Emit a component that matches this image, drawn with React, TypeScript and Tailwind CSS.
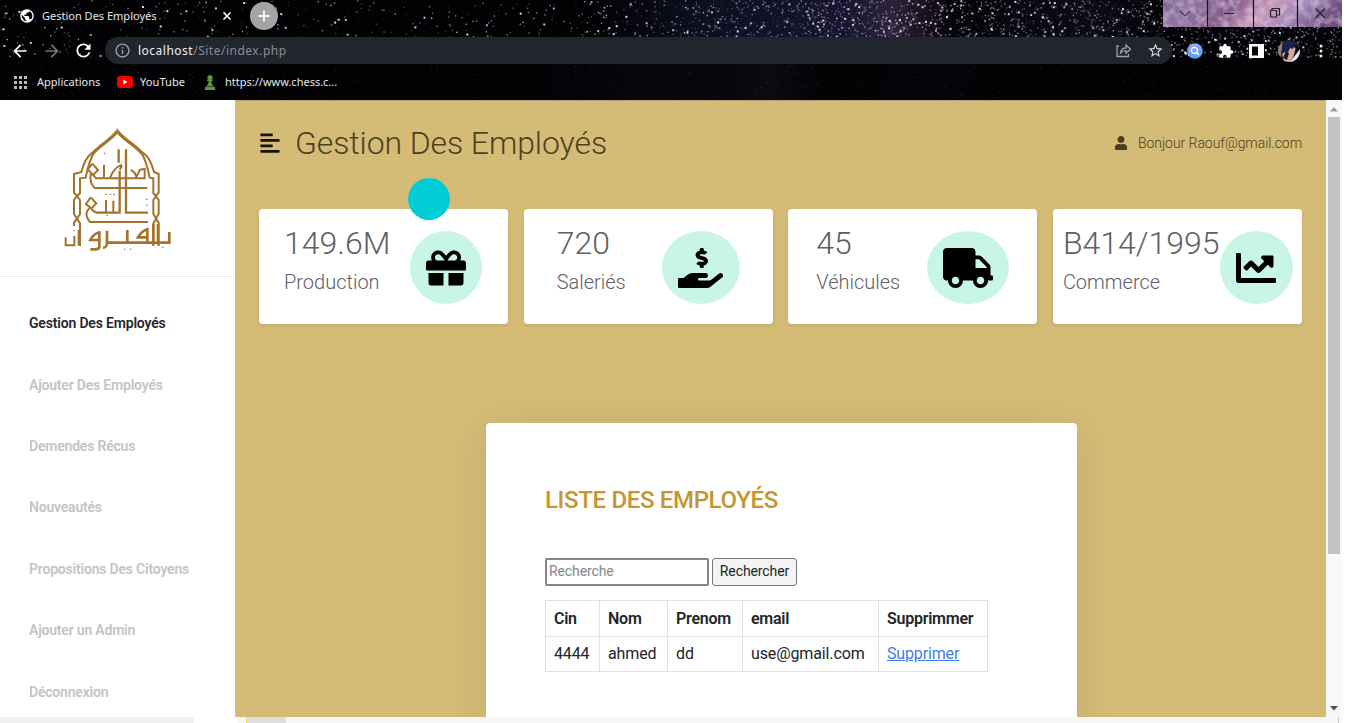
import React from "react";
import { FaAlignLeft, FaChartLine, FaGift, FaHandHoldingUsd, FaTruck, FaUser } from "react-icons/fa";
import { MdExtension, MdPublic, MdRefresh, MdStarBorder, MdArrowBack, MdArrowForward, MdInfoOutline } from "react-icons/md";

function makeRandom(seed: number) {
  let s = seed;
  return () => {
    s = (s * 1664525 + 1013904223) % 4294967296;
    return s / 4294967296;
  };
}

function buildStars() {
  const rnd = makeRandom(41);
  const stars: { x: number; y: number; s: number; o: number; c: string }[] = [];
  const tints = ["#ffffff", "#d9dcff", "#c3bfe2", "#f2e4ff"];
  for (let i = 0; i < 10000; i++) {
    const x = rnd() * 1342;
    const y = rnd() * 57;
    const density = x < 580 ? 0.14 : x < 680 ? 0.35 : x < 800 ? 0.65 : x < 940 ? 0.95 : 0.75;
    const keep = rnd();
    const bright = rnd();
    const tint = tints[Math.floor(rnd() * 4)];
    if (keep > density) continue;
    const big = bright > 0.94;
    stars.push({ x, y, s: big ? 2 : 1.4, o: big ? 0.85 : bright * bright * 0.8, c: tint });
  }
  for (let i = 0; i < 500; i++) {
    stars.push({ x: rnd() * 1342, y: 57 + rnd() * 42, s: 1, o: rnd() * 0.22, c: tints[Math.floor(rnd() * 4)] });
  }
  return stars;
}

const STARS = buildStars();

function Sky() {
  return (
    <svg className="absolute inset-0" width="1342" height="100" viewBox="0 0 1342 100" aria-hidden="true">
      <defs>
        <linearGradient id="haze" x1="0" x2="1" y1="0" y2="0">
          <stop offset="0.44" stopColor="#1c2247" stopOpacity="0" />
          <stop offset="0.52" stopColor="#1c2247" stopOpacity="0.4" />
          <stop offset="0.63" stopColor="#2c2858" stopOpacity="0.5" />
          <stop offset="0.665" stopColor="#56446e" stopOpacity="0.5" />
          <stop offset="0.69" stopColor="#3d2340" stopOpacity="0.4" />
          <stop offset="0.71" stopColor="#1a1430" stopOpacity="0.1" />
          <stop offset="0.81" stopColor="#1d1e3e" stopOpacity="0.35" />
          <stop offset="0.87" stopColor="#15152c" stopOpacity="0.1" />
        </linearGradient>
      </defs>
      <rect width="1342" height="100" fill="#020204" />
      <rect width="1342" height="37" fill="url(#haze)" />
      <rect y="64" width="1160" height="36" fill="url(#haze)" opacity="0.25" />
      {STARS.map((s, i) => (
        <rect key={i} x={s.x} y={s.y} width={s.s} height={s.s} fill={s.c} opacity={s.o} />
      ))}
    </svg>
  );
}

function WindowControls() {
  return (
    <svg className="absolute top-0 right-0" width="179" height="27" viewBox="0 0 179 27" aria-hidden="true">
      <defs>
        <linearGradient id="nebula" x1="0" x2="1" y1="0" y2="0.15">
          <stop offset="0" stopColor="#77618f" />
          <stop offset="0.18" stopColor="#8f759f" />
          <stop offset="0.42" stopColor="#805c8a" />
          <stop offset="0.6" stopColor="#c997b8" />
          <stop offset="0.8" stopColor="#a18ab5" />
          <stop offset="1" stopColor="#6b4d7c" />
        </linearGradient>
        <filter id="grain" x="0" y="0" width="100%" height="100%">
          <feTurbulence type="fractalNoise" baseFrequency="0.12" numOctaves="3" seed="7" />
          <feColorMatrix values="0 0 0 0 0.9  0 0 0 0 0.75  0 0 0 0 0.88  1.2 0 0 0 -0.48" />
        </filter>
      </defs>
      <rect width="179" height="27" fill="url(#nebula)" />
      <rect width="179" height="27" filter="url(#grain)" />
      <path d="M44.5 0v27M90.5 0v27M134.5 0v27" stroke="#1d1320" strokeWidth="1.2" />
      <g fill="none" stroke="#2a1d30" strokeWidth="1.2">
        <path d="M17 11l5 5 5-5" strokeOpacity="0.7" />
        <path d="M61 13.500h10M107.500 10.500h6v6.500h-6zM109 10.500V8.500h7.500v6.500h-2.500M152.500 8.500l9.500 9.500M162 8.500l-9.500 9.500" />
      </g>
    </svg>
  );
}

function Browser() {
  return (
    <header className="relative h-[100px] w-[1342px] shrink-0 overflow-hidden font-['Noto_Sans','Open_Sans',sans-serif] text-[11px] text-[#e6e6e8]">
      <Sky />
      <WindowControls />
      <div className="relative flex h-[37px] items-start">
        <div className="flex h-8 w-[250px] items-center pl-[19px]">
          <MdPublic className="size-[16px] text-white" />
          <span className="ml-[7px] w-[180px]">Gestion Des Employés</span>
          <svg width="10" height="10" viewBox="0 0 10 10" aria-hidden="true">
            <path d="M1.500 1.500l7 7M8.500 1.500l-7 7" stroke="#fff" strokeWidth="1.600" />
          </svg>
        </div>
        <div className="mt-[2px] flex size-[28px] items-center justify-center rounded-full bg-[#a5a5a8]">
          <svg width="12" height="12" viewBox="0 0 12 12" aria-hidden="true">
            <path d="M6 0.500v11M0.500 6h11" stroke="#fff" strokeWidth="1.800" />
          </svg>
        </div>
      </div>
      <div className="relative flex h-[27px] items-center">
        <MdArrowBack className="ml-[10px] size-[20px] text-white" />
        <MdArrowForward className="ml-[12px] size-[20px] text-[#77777a]" />
        <MdRefresh className="ml-[11px] size-[21px] text-white" />
        <div className="ml-[11px] flex h-[27px] w-[1067px] items-center rounded-full bg-[#21252e] pl-[9px] text-[12px]">
          <MdInfoOutline className="size-[17px] text-[#9da0a6]" />
          <span className="ml-[7px] flex-1 tracking-[0.500px] text-[#898d94]">
            <span className="text-[#eef0f3]">localhost</span>/Site/index.php
          </span>
          <svg width="16" height="15" viewBox="0 0 16 15" fill="none" stroke="#9da0a6" strokeWidth="1.300" aria-hidden="true">
            <path d="M3 3H1v10.500h11.500v-2.500M4.500 10c.3-3.500 2.200-5 5.500-5V2l4.500 4.200L10 10.300V7.600c-2.500 0-4 .6-5.500 2.400z" />
          </svg>
          <MdStarBorder className="mr-[8px] ml-[15px] size-[17px] text-[#d8dade]" />
        </div>
        <svg className="ml-[15px]" width="16" height="16" viewBox="0 0 16 16" aria-hidden="true">
          <defs>
            <linearGradient id="lens" x1="0.200" x2="0.600" y1="0" y2="1">
              <stop offset="0" stopColor="#a9a0ff" />
              <stop offset="1" stopColor="#4aa3ee" />
            </linearGradient>
          </defs>
          <circle cx="8" cy="8" r="7.800" fill="url(#lens)" />
          <circle cx="7.400" cy="7.400" r="3" fill="none" stroke="#fff" strokeWidth="1.300" />
          <path d="M9.600 9.600l2.400 2.400" stroke="#fff" strokeWidth="1.400" />
        </svg>
        <MdExtension className="ml-[15px] size-[16px] text-white" />
        <svg className="ml-[15px]" width="15" height="14" viewBox="0 0 15 14" aria-hidden="true">
          <path d="M0 0h15v14H0z" fill="#fff" />
          <path d="M3 2.500h6v9H3z" fill="#050507" />
        </svg>
        <svg className="ml-[14px]" width="22" height="22" viewBox="0 0 22 22" aria-hidden="true">
          <defs>
            <clipPath id="face">
              <circle cx="11" cy="11" r="11" />
            </clipPath>
          </defs>
          <g clipPath="url(#face)">
            <path d="M0 0h22v22H0z" fill="#171522" />
            <path d="M0 2l5-1-1 7-1 9-3-3z" fill="#9c7a80" />
            <path d="M4 14l5-4 5-3 4 1-1 6-5 8H6z" fill="#d5aa9c" />
            <path d="M5 1l12-1 2 6-3-2-1 5-3-1-3 7-3-4-3 5z" fill="#1c2449" />
            <path d="M11 13l-2 7-4-2 2-5z" fill="#16182c" />
            <path d="M22 9l-5 6-5 7h10z" fill="#eceaf0" />
            <path d="M18 5l4 4-7 9 2-7z" fill="#0d0d14" />
          </g>
        </svg>
        <svg className="ml-[19px]" width="4" height="14" viewBox="0 0 4 14" fill="#f1f1f1" aria-hidden="true">
          <circle cx="2" cy="2" r="1.500" />
          <circle cx="2" cy="7" r="1.500" />
          <circle cx="2" cy="12" r="1.500" />
        </svg>
      </div>
      <div className="relative flex h-[36px] items-center text-[11px]">
        <svg className="ml-[14px]" width="13" height="13" viewBox="0 0 13 13" fill="#b9b9bc" aria-hidden="true">
          {[0, 5, 10].map((y) => [0, 5, 10].map((x) => <rect key={`${x}-${y}`} x={x} y={y} width="3" height="3" />))}
        </svg>
        <span className="ml-[10px] w-[80px]">Applications</span>
        <svg width="16" height="12" viewBox="0 0 16 12" aria-hidden="true">
          <rect width="16" height="12" rx="3" fill="#f40000" />
          <path d="M6.300 3.500v5l4.200-2.500z" fill="#fff" />
        </svg>
        <span className="ml-[7px] w-[64px] tracking-[0.100px]">YouTube</span>
        <svg width="12" height="15" viewBox="0 0 12 15" fill="#5f9540" aria-hidden="true">
          <path d="M6 0a2.700 2.700 0 0 1 1.800 4.700H9V6H7.400c.1 2 .6 3.500 2 5H2.600c1.400-1.500 1.900-3 2-5H3V4.700h1.200A2.700 2.700 0 0 1 6 0zM1.500 11.500h9L11.500 15H.5z" />
        </svg>
        <span className="ml-[9px]">https://www.chess.c...</span>
      </div>
    </header>
  );
}

function Logo() {
  return (
    <svg width="116" height="130" viewBox="0 0 348 390" fill="none" stroke="#a3722c" strokeWidth="6" aria-hidden="true">
      <path d="M172 22C150 50 122 62 100 87M172 22c22 28 50 38 74 66" strokeWidth="10" />
      <path d="M172 14v14" strokeWidth="5" />
      <path d="M104 82C78 96 70 122 64 144l-22 6v56l9 10-9 12v42l9 14-9 12v10" />
      <path d="M102 86c-16 26-20 52-25 75l-17 2v45l-9 8 9 12v42l-9 14 9 14v68" />
      <path d="M242 82c26 14 34 40 40 62l14 6v56l-9 10 9 12v42l-9 14 9 12v70" />
      <path d="M244 86c16 26 20 52 25 75l11 2v45l9 8-9 12v42l9 14-9 14v68" />
      <path d="M176 76v40M198 76v190h66M179 140v126h-71" strokeWidth="7" />
      <path d="M97 119l-14 17 16 17 15-15-17-19M92 150c-3 18 0 30 12 42h158M100 153l8 10h146v-28l-14 2-10 20M132 122v40M150 162c8-20 16-32 36-40M186 125l-7 12M212 138c10 4 16 12 18 24" />
      <path d="M92 220l-14 20 16 13 15-15-17-18M90 252c-16 12-12 28 0 42h174M94 256l14 10M138 228v36M160 230v36" />
      <path d="M17 340v24h26v-28M56 318v47" />
      <path d="M122 324c-14 2-24 10-31 24h27v-22 44c-4 8-12 6-27 6M141 320v38c0 10-4 12-12 14M141 356h187v-32M202 318v38M262 358v-42c-14 4-22 14-28 24h28M280 300v62M294 300v62" strokeWidth="8" />
      <path d="M192 376h4M210 376h4M306 370h4M132 88h4M136 211h4M150 211h4M160 211h4M258 226h4M258 244h4M139 274h4M40 320h4" strokeWidth="4" />
    </svg>
  );
}

const NAV = [
  "Gestion Des Employés",
  "Ajouter Des Employés",
  "Demendes Récus",
  "Nouveautés",
  "Propositions Des Citoyens",
  "Ajouter un Admin",
  "Déconnexion",
];

function Sidebar() {
  return (
    <aside className="w-[235px] shrink-0 bg-white">
      <div className="flex h-[177px] items-start border-b border-[#f1f1f2] pt-[24px] pl-[60px]">
        <Logo />
      </div>
      <nav className="flex flex-col pt-[16px] pl-[29px]">
        {NAV.map((item, i) => (
          <a
            key={item}
            className={
              i === 0
                ? "flex h-[61.400px] items-center text-[14px] font-semibold tracking-[-0.18px] text-[#25282b]"
                : "flex h-[61.400px] items-center text-[14px] font-semibold tracking-[-0.2px] text-[#c2c4c7]"
            }
          >
            {item}
          </a>
        ))}
      </nav>
    </aside>
  );
}

const CARDS = [
  { value: "149.6M", label: "Production", Icon: FaGift, pad: "pl-[25px]", text: "w-[126px]", circle: "w-[72px]", icon: "h-[40px] w-[40px]" },
  { value: "720", label: "Saleriés", Icon: FaHandHoldingUsd, pad: "pl-[33px]", text: "w-[105px]", circle: "w-[78px]", icon: "h-[40px] w-[45px]" },
  { value: "45", label: "Véhicules", Icon: FaTruck, pad: "pl-[28px]", text: "w-[111px]", circle: "w-[82px]", icon: "h-[40px] w-[50px]" },
  { value: "B414/1995", label: "Commerce", Icon: FaChartLine, pad: "pl-[10px]", text: "w-[157px]", circle: "w-[73px]", icon: "h-[40px] w-[40px]" },
];

function StatCards() {
  return (
    <section className="mt-[39px] grid grid-cols-4 gap-[15.500px]">
      {CARDS.map(({ value, label, Icon, pad, text, circle, icon }) => (
        <div key={label} className={`flex h-[115px] rounded-[4px] bg-white pt-[15px] shadow-[0_2px_4px_rgba(0,0,0,0.08)] ${pad}`}>
          <div className={`shrink-0 whitespace-nowrap text-[#5d6165] ${text}`}>
            <h3 className="text-[32px] leading-[38px] font-light">{value}</h3>
            <p className="mt-[5px] text-[20px] leading-[30px] font-light">{label}</p>
          </div>
          <div className={`mt-[7px] flex h-[73px] shrink-0 items-center justify-center rounded-[50%] bg-[#c9f5e4] text-black ${circle}`}>
            <Icon className={icon} />
          </div>
        </div>
      ))}
    </section>
  );
}

function EmployeeList() {
  return (
    <section className="mt-[99px] ml-[227px] h-[310px] w-[591px] rounded-[4px] bg-white pt-[61px] pl-[59px] text-[#212529] shadow-[0_8px_40px_rgba(0,0,0,0.09)]">
      <h2 className="text-[24px] leading-[32px] font-medium tracking-[-0.34px] text-[#c5962f]">LISTE DES EMPLOYÉS</h2>
      <form className="mt-[42px] flex gap-[3px]">
        <input
          placeholder="Recherche"
          className="h-[28px] w-[164px] rounded-[2px] border-2 border-[#858585] px-[2px] pb-[2px] text-[14px] tracking-[-0.1px] placeholder:text-[#85888b]"
        />
        <button type="button" className="h-[28px] w-[85px] rounded-[3px] border border-[#767676] bg-[#f3f3f3] pb-[2px] text-[14px] tracking-[-0.1px]">
          Rechercher
        </button>
      </form>
      <table className="mt-[14px] w-[442px] table-fixed border-collapse text-left text-[16px]">
        <colgroup>
          <col className="w-[54px]" />
          <col className="w-[68px]" />
          <col className="w-[75px]" />
          <col className="w-[136px]" />
          <col className="w-[109px]" />
        </colgroup>
        <thead>
          <tr className="h-[36px]">
            {["Cin", "Nom", "Prenom", "email", "Supprimmer"].map((h) => (
              <th key={h} className="border border-[#dee2e6] px-[8px] font-semibold tracking-[-0.25px]">
                {h}
              </th>
            ))}
          </tr>
        </thead>
        <tbody>
          <tr className="h-[35px]">
            {["4444", "ahmed", "dd", "use@gmail.com"].map((c) => (
              <td key={c} className="border border-[#dee2e6] px-[8px] tracking-[-0.12px]">
                {c}
              </td>
            ))}
            <td className="border border-[#dee2e6] px-[8px] tracking-[-0.15px] text-[#3d7cf0] underline">Supprimer</td>
          </tr>
        </tbody>
      </table>
    </section>
  );
}

function Scrollbar() {
  return (
    <div className="flex w-[16px] shrink-0 flex-col items-center bg-[#f7f8f8]">
      <svg className="mt-[7px]" width="8" height="5" viewBox="0 0 8 5" aria-hidden="true">
        <path d="M4 0l4 4.500H0z" fill="#9b9b9b" />
      </svg>
      <div className="mt-[5px] h-[437px] w-[12px] bg-[#c3c3c4]" />
      <svg className="mt-auto mb-[6px]" width="8" height="5" viewBox="0 0 8 5" aria-hidden="true">
        <path d="M4 4.500l4-4.500H0z" fill="#4c4c4c" />
      </svg>
    </div>
  );
}

export default function App() {
  return (
    <div className="relative flex h-[723px] w-[1347px] flex-col overflow-hidden bg-white font-['Roboto',sans-serif]">
      <Browser />
      <div className="flex h-[617px] w-[1342px] shrink-0 overflow-hidden">
        <Sidebar />
        <main className="flex-1 overflow-hidden border-t border-[#b6a472] bg-[#d4bb76] px-[24px] pt-[15px]">
          <div className="flex h-[54px] items-center">
            <FaAlignLeft className="size-[22px] text-[#16130c]" />
            <h1 className="ml-[14px] flex-1 text-[32px] leading-[40px] font-light tracking-[-0.1px] text-[#4f4022]">Gestion Des Employés</h1>
            <FaUser className="size-[14px] text-[#493c20]" />
            <span className="ml-[10px] text-[14px] font-light tracking-[-0.05px] text-[#4f4022]">Bonjour Raouf@gmail.com</span>
          </div>
          <StatCards />
          <EmployeeList />
        </main>
        <Scrollbar />
      </div>
      <div className="flex h-[6px] w-[1342px] shrink-0 bg-[#f7f7f7]">
        <div className="w-[194px] bg-[#f0f0f0]" />
        <div className="w-[43px] bg-white" />
        <div className="ml-[9px] w-[40px] border-l border-[#e4dc64] bg-[#dedede]" />
        <div className="mr-[3px] ml-auto w-px bg-[#c9c9c9]" />
      </div>
      <div className="absolute top-[178px] left-[408px] size-[42px] rounded-full bg-[#00ccd6]" />
    </div>
  );
}
